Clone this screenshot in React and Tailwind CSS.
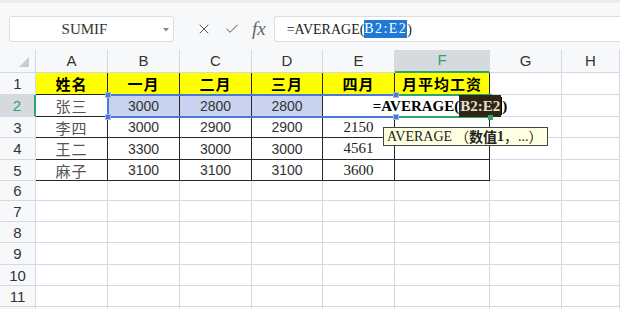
import { X, Check } from "lucide-react";

const cols = ["A", "B", "C", "D", "E", "F", "G", "H"];
const rowHeights = [22, 22, 21, 22, 21, 20, 21, 21, 22, 21, 21, 4];

const data = [
  ["姓名", "一月", "二月", "三月", "四月", "月平均工资"],
  ["张三", "3000", "2800", "2800", "", ""],
  ["李四", "3000", "2900", "2900", "2150", ""],
  ["王二", "3300", "3000", "3000", "4561", ""],
  ["麻子", "3100", "3100", "3100", "3600", ""],
];

const cjk = "font-['Noto_Sans_CJK_SC',sans-serif]";

function Cell({ r, c }) {
  const inTable = r < 5 && c < 6;
  const value = inTable ? data[r][c] : "";
  let cls = "flex items-center justify-center border-r border-b overflow-hidden whitespace-nowrap leading-none ";
  cls += inTable ? "border-[#262626] " : "border-[#d3d8e4] ";
  if (r === 0 && c < 6) {
    cls += `bg-[#ffff00] ${cjk} font-bold text-[15px] tracking-[1px] text-black `;
  } else if (c === 0) {
    cls += `${cjk} text-[15px] tracking-[1px] text-[#555] `;
  } else if (c === 4) {
    cls += "font-['Liberation_Serif',serif] text-[15px] text-[#222] ";
  } else {
    cls += "font-['Liberation_Sans',sans-serif] text-[14px] text-[#333] ";
  }
  if (r === 1 && c >= 1 && c <= 3) cls += "bg-[#c9d3ef] ";
  return <div className={cls}>{value}</div>;
}

export default function App() {
  return (
    <div className="w-[620px] h-[309px] overflow-hidden bg-white font-['Liberation_Sans',sans-serif]">
      <div className="h-[50px] bg-[#f7f8fa] border-t-[3px] border-[#ececec] pt-[13px] flex items-start">
        <div className="ml-[9px] w-[165px] h-[26px] bg-white border border-[#dcdde0] rounded-[3px] flex items-center relative">
          <span className="flex-1 text-center font-['Liberation_Serif',serif] text-[15px] text-[#333] pr-[14px]">SUMIF</span>
          <svg className="absolute right-[4px] top-[11px]" width="6" height="4" viewBox="0 0 6 4">
            <path d="M0 0 L6 0 L3 3.5 Z" fill="#888" />
          </svg>
        </div>
        <div className="ml-[22px] h-[26px] flex items-center gap-[12px] text-[#555]">
          <X size={16} strokeWidth={1.5} />
          <Check size={16} strokeWidth={1.5} />
          <span className="font-['Liberation_Serif',serif] italic text-[19px] leading-none text-[#666] -mt-[2px]">fx</span>
        </div>
        <div className="ml-[8px] flex-1 h-[26px] bg-white border border-r-0 border-[#dcdde0] rounded-l-[3px] flex items-center pl-[12px] font-['Liberation_Serif',serif] text-[14px] text-[#222] whitespace-nowrap">
          <span>=AVERAGE(</span>
          <span className="bg-[#1f7ad6] text-white tracking-[1.4px] leading-[18px]">B2:E2</span>
          <span>)</span>
        </div>
      </div>

      <div className="relative">
        <div className="grid grid-cols-[36px_72px_72px_72px_71px_72px_95px_72px_1fr]">
          <div className="h-[23px] bg-[#f7f8fa] border-r border-b border-[#d3d8e4] flex items-end justify-end pr-[6px] pb-[5px]">
            <svg width="10" height="10" viewBox="0 0 10 10">
              <path d="M10 0 L10 10 L0 10 Z" fill="#c9ccd2" />
            </svg>
          </div>
          {cols.map((c) => (
            <div
              key={c}
              className={
                c === "F"
                  ? "h-[23px] bg-[#d6d9de] border-r border-b-2 border-r-[#d3d8e4] border-b-[#2ea36b] flex items-center justify-center text-[15px] text-[#2ea36b]"
                  : "h-[23px] bg-[#f7f8fa] border-r border-b border-[#d3d8e4] flex items-center justify-center text-[15px] text-[#333]"
              }
            >
              {c}
            </div>
          ))}
          {rowHeights.map((h, r) => (
            <div key={r} className="contents">
              <div
                style={{ height: h }}
                className={
                  r === 1
                    ? "bg-[#d6d9de] border-r-2 border-b border-r-[#2ea36b] border-b-[#d3d8e4] flex items-center justify-center leading-none text-[15px] text-[#2ea36b]"
                    : "bg-[#f7f8fa] border-r border-b border-[#d3d8e4] flex items-center justify-center leading-none overflow-hidden text-[15px] text-[#333]"
                }
              >
                {r < 11 ? r + 1 : ""}
              </div>
              {cols.map((c, ci) => (
                <Cell key={c} r={r} c={ci} />
              ))}
            </div>
          ))}
        </div>

        {/* selected reference range B2:E2 */}
        <div className="absolute left-[107px] top-[44px] w-[290px] h-[24px] border-2 border-[#4b79d8]" />
        {/* active cell F2 */}
        <div className="absolute left-[395px] top-[44px] w-[97px] h-[24px] border-2 border-[#2ea36b]" />
        {/* cell editor */}
        <div className="absolute left-[370px] top-[46px] w-[140px] h-[20px] bg-white flex items-center justify-center font-['Liberation_Serif',serif] font-bold text-[15px] text-black">
          =AVERAGE(<span className="bg-[#2e2518] text-[#e6dfc8] px-[1px]">B2:E2</span>
          <span className="w-px h-[18px] bg-black" />)
        </div>
        {/* handles */}
        <div className="absolute left-[105px] top-[42px] w-[6px] h-[6px] bg-[#4b79d8] border border-[#9fb6ea]" />
        <div className="absolute left-[105px] top-[64px] w-[6px] h-[6px] bg-[#4b79d8] border border-[#9fb6ea]" />
        <div className="absolute left-[393px] top-[42px] w-[6px] h-[6px] bg-[#4b79d8] border border-[#9fb6ea]" />
        <div className="absolute left-[393px] top-[64px] w-[6px] h-[6px] bg-[#4b79d8] border border-[#9fb6ea]" />
        <div className="absolute left-[488px] top-[65px] w-[5px] h-[5px] bg-[#2ea36b]" />

        {/* function tooltip */}
        <div className="absolute left-[383px] top-[77px] h-[19px] pl-[3px] pr-[4px] bg-[#ffffe1] border border-[#444] flex items-center whitespace-nowrap text-[14px] text-[#222]">
          <span className="font-['Liberation_Serif',serif]">AVERAGE</span>
          <span className={`${cjk} ml-[3px]`}>（</span>
          <span className={`${cjk} font-bold`}>数值</span>
          <span className="font-['Liberation_Serif',serif] font-bold">1</span>
          <span className={cjk}>，</span>
          <span className="font-['Liberation_Serif',serif]">...</span>
          <span className={cjk}>）</span>
        </div>
      </div>
    </div>
  );
}
